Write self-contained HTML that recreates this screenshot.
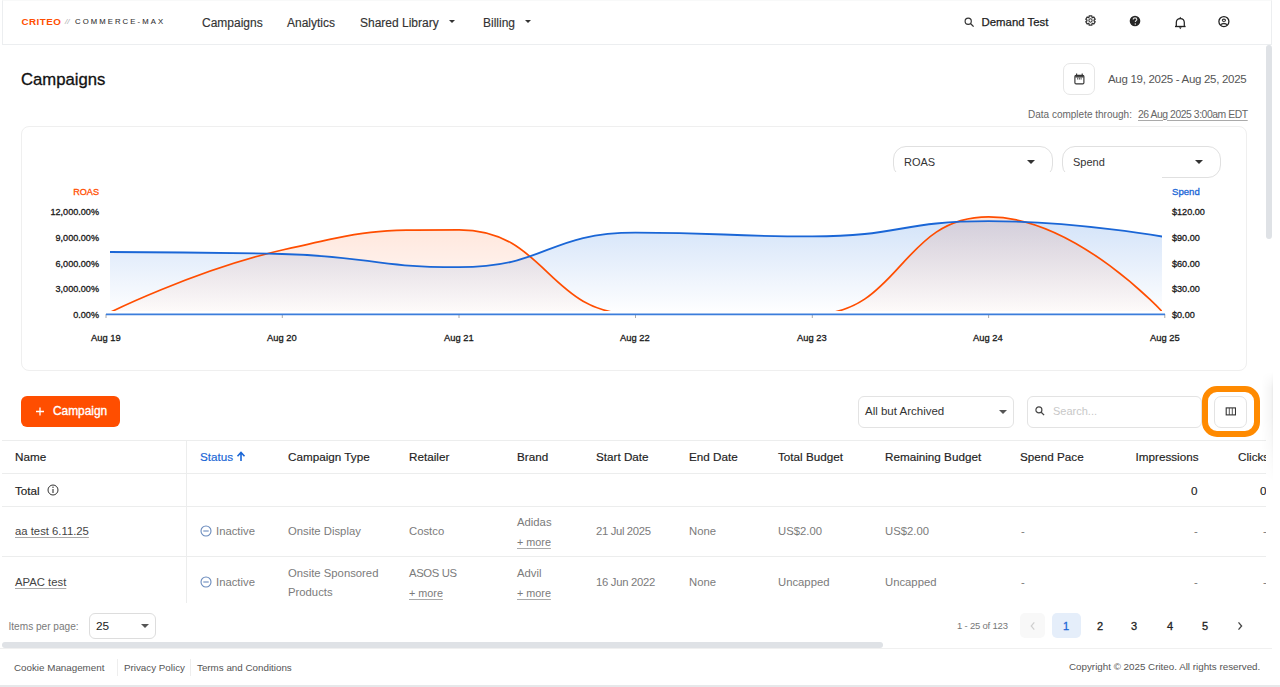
<!DOCTYPE html>
<html><head><meta charset="utf-8">
<style>
*{box-sizing:border-box;margin:0;padding:0}
html,body{width:1280px;height:687px;overflow:hidden;background:#fff;font-family:"Liberation Sans",sans-serif;color:#222}
.a{position:absolute}
.t{position:absolute;white-space:nowrap;line-height:1}
.hdr{left:2px;top:0;width:1270px;height:45px;border:1px solid #eceef0;border-top-color:#f8f9f9}
.nav{font-size:12px;color:#333;top:16.5px;-webkit-text-stroke:0.15px #333}
.caret{position:absolute;width:0;height:0;border-left:3px solid transparent;border-right:3px solid transparent;border-top:3px solid #333}
.box{position:absolute;border:1px solid #e3e3e3;background:#fff}
.th{font-size:11.7px;color:#222;top:451px;-webkit-text-stroke:0.15px #222}
.td{font-size:11.3px;color:#7b7b7b}
.u{text-decoration:underline;text-underline-offset:1.5px;text-decoration-color:#aaa}
.hl{position:absolute;height:1px;background:#eceded}
.ax{font-size:9.1px;color:#1a1a1a;-webkit-text-stroke:0.3px #1a1a1a}
.xl{font-size:9.4px;color:#1a1a1a;-webkit-text-stroke:0.3px #1a1a1a}
.pg{font-size:11px;color:#222;top:621px;-webkit-text-stroke:0.3px #222}
.ft{font-size:9.8px;color:#555;top:662.5px}
</style></head><body>
<!-- header -->
<div class="a hdr"></div>
<div class="t" style="left:21.5px;top:17.3px;font-size:9.8px;letter-spacing:0.45px;font-weight:bold;color:#ff4e00">CRITEO</div>
<div class="t" style="left:65px;top:18px;font-size:8px;color:#aaa;font-style:italic">//</div>
<div class="t" style="left:75px;top:18px;font-size:7.7px;color:#333;letter-spacing:2.1px;-webkit-text-stroke:0.1px #333">COMMERCE-MAX</div>
<div class="t nav" style="left:202px">Campaigns</div>
<div class="t nav" style="left:287px">Analytics</div>
<div class="t nav" style="left:360px">Shared Library</div>
<div class="caret" style="left:449px;top:20px"></div>
<div class="t nav" style="left:483px">Billing</div>
<div class="caret" style="left:525px;top:20px"></div>
<svg class="a" style="left:963.5px;top:16.5px" width="11" height="11" viewBox="0 0 11 11"><circle cx="4.2" cy="4.2" r="3.1" fill="none" stroke="#333" stroke-width="1.15"/><line x1="6.5" y1="6.5" x2="9.6" y2="9.6" stroke="#333" stroke-width="1.25"/></svg>
<div class="t nav" style="left:981.5px;font-size:11.4px;color:#222;-webkit-text-stroke:0.25px #222">Demand Test</div>
<svg class="a" style="left:1084px;top:14.2px" width="13" height="13" viewBox="-1 -1 15 15"><path d="M4.83,2.76 L4.95,1.12 L8.05,1.12 L8.17,2.76 L8.91,3.18 L10.39,2.47 L11.93,5.15 L10.58,6.08 L10.58,6.92 L11.93,7.85 L10.39,10.53 L8.91,9.82 L8.17,10.24 L8.05,11.88 L4.95,11.88 L4.83,10.24 L4.09,9.82 L2.61,10.53 L1.07,7.85 L2.42,6.92 L2.42,6.08 L1.07,5.15 L2.61,2.47 L4.09,3.18Z" fill="none" stroke="#333" stroke-width="1.45" stroke-linejoin="round"/><circle cx="6.5" cy="6.5" r="1.9" fill="none" stroke="#333" stroke-width="1.2"/></svg>
<svg class="a" style="left:1129px;top:14.8px" width="12" height="12" viewBox="0 0 12 12"><circle cx="6" cy="6" r="5.3" fill="#262626"/><path d="M4.2 4.6c0-1.1.8-1.8 1.8-1.8s1.8.7 1.8 1.6c0 1.2-1.5 1.3-1.5 2.6" fill="none" stroke="#ddd" stroke-width="1.2"/><circle cx="6.3" cy="8.9" r="0.75" fill="#ddd"/></svg>
<svg class="a" style="left:1170px;top:10px" width="20" height="22" viewBox="0 0 20 22"><path d="M6.3,16.4 V12.6 C6.3,9.9 8,8.5 10.3,8.5 C12.6,8.5 14.3,9.9 14.3,12.6 V16.4" fill="none" stroke="#222" stroke-width="1.25"/><path d="M5,16.5 H15.6" stroke="#222" stroke-width="1.35"/><path d="M8.9,17.2 H11.7 L10.3,19.3Z" fill="#333"/><path d="M9.1,8.6 L10.3,6.8 L11.5,8.6Z" fill="#222"/></svg>
<svg class="a" style="left:1210px;top:8px" width="28" height="28" viewBox="0 0 28 28"><circle cx="13.9" cy="13.6" r="5.0" fill="none" stroke="#222" stroke-width="1.3"/><ellipse cx="13.9" cy="12.3" rx="1.6" ry="1.15" fill="none" stroke="#333" stroke-width="1.1"/><path d="M10.4,17.2 C11.5,15.9 12.6,15.5 13.9,15.5 C15.2,15.5 16.3,15.9 17.4,17.2" fill="none" stroke="#333" stroke-width="1.3"/></svg>
<!-- vertical scrollbar -->
<div class="a" style="left:1266px;top:45px;width:6px;height:194px;background:#dfe2e6;border-radius:3px"></div>

<!-- title -->
<div class="t" style="left:21px;top:71.5px;font-size:16.7px;color:#111;-webkit-text-stroke:0.3px #111">Campaigns</div>
<div class="box" style="left:1063px;top:63px;width:32px;height:32px;border-radius:7px;border-color:#e6e6e6"></div>
<svg class="a" style="left:1068px;top:68px" width="22" height="22" viewBox="0 0 22 22"><rect x="6.9" y="7.3" width="9" height="8.6" rx="1.2" fill="none" stroke="#333" stroke-width="1.15"/><line x1="7.3" y1="8.8" x2="15.5" y2="8.8" stroke="#333" stroke-width="1.4"/><g stroke="#444" stroke-width="0.9"><line x1="9.7" y1="9.6" x2="9.7" y2="11.6"/><line x1="11.4" y1="9.6" x2="11.4" y2="11.6"/><line x1="13.1" y1="9.6" x2="13.1" y2="11.6"/></g><g stroke="#333" stroke-width="1.1"><line x1="8.6" y1="5.6" x2="8.6" y2="7.5"/><line x1="14.2" y1="5.6" x2="14.2" y2="7.5"/></g></svg>
<div class="t" style="left:1108px;top:73.5px;font-size:11.5px;letter-spacing:-0.3px;color:#555">Aug 19, 2025 - Aug 25, 2025</div>
<div class="t" style="left:1028px;top:110px;font-size:10px;color:#666">Data complete through:</div>
<div class="t u" style="left:1138px;top:109.5px;font-size:10.4px;letter-spacing:-0.45px;color:#666">26 Aug 2025 3:00am EDT</div>

<!-- chart card -->
<div class="box" style="left:21px;top:126px;width:1226px;height:245px;border-radius:8px;border-color:#efefef"></div>
<div class="box" style="left:893px;top:146px;width:160px;height:32px;border-radius:13px;border-color:#e0e0e0"></div>
<div class="t" style="left:904px;top:157px;font-size:11px;color:#333">ROAS</div>
<div class="caret" style="left:1027px;top:160px;border-left-width:4px;border-right-width:4px;border-top-width:4px"></div>
<div class="box" style="left:1062px;top:146px;width:159px;height:32px;border-radius:13px;border-color:#e0e0e0"></div>
<div class="t" style="left:1073px;top:157px;font-size:11px;color:#333">Spend</div>
<div class="caret" style="left:1195px;top:160px;border-left-width:4px;border-right-width:4px;border-top-width:4px"></div>
<div class="a" style="left:30px;top:172px;width:1132px;height:190px;background:#fff"></div>
<svg class="a" style="left:0;top:0" width="1280" height="687">
<defs>
<linearGradient id="gb" x1="0" y1="0" x2="0" y2="1"><stop offset="0" stop-color="#1b6fe0" stop-opacity="0.19"/><stop offset="1" stop-color="#1a66d6" stop-opacity="0.0"/></linearGradient>
<linearGradient id="go" x1="0" y1="0" x2="0" y2="1"><stop offset="0" stop-color="#ff4d00" stop-opacity="0.15"/><stop offset="1" stop-color="#ff4d00" stop-opacity="0.015"/></linearGradient>
<clipPath id="cp"><rect x="110" y="150" width="1052" height="161"/></clipPath><clipPath id="cp2"><rect x="110" y="150" width="1052" height="161.3"/></clipPath>
</defs>
<g clip-path="url(#cp)">
<path d="M106.00,314.40 C106.00,314.40 194.15,270.20 282.30,250.00 C370.65,229.80 370.65,229.80 459.00,229.80 C547.25,229.80 547.25,314.40 635.50,314.40 C723.90,314.40 723.90,314.40 812.30,314.40 C900.45,314.40 900.45,216.90 988.60,216.90 C1076.70,216.90 1164.80,314.40 1164.80,314.40 L1164.8,314.4 L106,314.4 Z" fill="url(#go)"/>
<path d="M106.00,252.00 C106.00,252.00 194.15,252.00 282.30,254.00 C370.65,256.00 370.65,267.20 459.00,267.20 C547.25,267.20 547.25,232.60 635.50,232.60 C723.90,232.60 723.90,236.40 812.30,236.40 C900.45,236.40 900.45,221.10 988.60,221.10 C1076.70,221.10 1164.80,237.00 1164.80,237.00 L1164.8,314.4 L106,314.4 Z" fill="url(#gb)"/>
<path d="M106.00,314.40 C106.00,314.40 194.15,270.20 282.30,250.00 C370.65,229.80 370.65,229.80 459.00,229.80 C547.25,229.80 547.25,314.40 635.50,314.40 C723.90,314.40 723.90,314.40 812.30,314.40 C900.45,314.40 900.45,216.90 988.60,216.90 C1076.70,216.90 1164.80,314.40 1164.80,314.40" fill="none" stroke="#ff4d00" stroke-width="1.7" clip-path="url(#cp2)"/>
<path d="M106.00,252.00 C106.00,252.00 194.15,252.00 282.30,254.00 C370.65,256.00 370.65,267.20 459.00,267.20 C547.25,267.20 547.25,232.60 635.50,232.60 C723.90,232.60 723.90,236.40 812.30,236.40 C900.45,236.40 900.45,221.10 988.60,221.10 C1076.70,221.10 1164.80,237.00 1164.80,237.00" fill="none" stroke="#1a66d6" stroke-width="1.8"/>
</g>
<g stroke="#aaa" stroke-width="1">
<line x1="106" y1="314" x2="106" y2="318"/><line x1="282.3" y1="314" x2="282.3" y2="318"/><line x1="459" y1="314" x2="459" y2="318"/><line x1="635.5" y1="314" x2="635.5" y2="318"/><line x1="812.3" y1="314" x2="812.3" y2="318"/><line x1="988.6" y1="314" x2="988.6" y2="318"/><line x1="1164.8" y1="314" x2="1164.8" y2="318"/>
</g>
<line x1="106" y1="314.4" x2="1165" y2="314.4" stroke="#3b7ddb" stroke-width="1.8"/>
</svg>
<div class="t ax" style="right:1181px;top:187.5px;color:#ff4e00;-webkit-text-stroke-color:#ff4e00">ROAS</div>
<div class="t ax" style="right:1181px;top:208px">12,000.00%</div>
<div class="t ax" style="right:1181px;top:234px">9,000.00%</div>
<div class="t ax" style="right:1181px;top:259.5px">6,000.00%</div>
<div class="t ax" style="right:1181px;top:285px">3,000.00%</div>
<div class="t ax" style="right:1181px;top:310.5px">0.00%</div>
<div class="t ax" style="left:1172px;top:186.5px;color:#1a66d6;-webkit-text-stroke-color:#1a66d6;font-size:9.6px">Spend</div>
<div class="t ax" style="left:1172px;top:208px">$120.00</div>
<div class="t ax" style="left:1172px;top:234px">$90.00</div>
<div class="t ax" style="left:1172px;top:259.5px">$60.00</div>
<div class="t ax" style="left:1172px;top:285px">$30.00</div>
<div class="t ax" style="left:1172px;top:310.5px">$0.00</div>
<div class="t xl" style="left:91px;top:333px">Aug 19</div>
<div class="t xl" style="left:267px;top:333px">Aug 20</div>
<div class="t xl" style="left:444px;top:333px">Aug 21</div>
<div class="t xl" style="left:620px;top:333px">Aug 22</div>
<div class="t xl" style="left:797px;top:333px">Aug 23</div>
<div class="t xl" style="left:973px;top:333px">Aug 24</div>
<div class="t xl" style="left:1150px;top:333px">Aug 25</div>

<!-- toolbar -->
<div class="a" style="left:21px;top:396px;width:99px;height:31px;background:#ff4e00;border-radius:6px"></div>
<svg class="a" style="left:35px;top:406px" width="10" height="11" viewBox="0 0 10 11"><path d="M5 1.5v8M1 5.5h8" stroke="#fff" stroke-width="1.3"/></svg>
<div class="t" style="left:53px;top:405.5px;font-size:11.9px;color:#fff;-webkit-text-stroke:0.35px #fff">Campaign</div>
<div class="box" style="left:858px;top:396px;width:156px;height:32px;border-radius:6px"></div>
<div class="t" style="left:865px;top:406px;font-size:11.5px;color:#333">All but Archived</div>
<div class="caret" style="left:999px;top:410px;border-left-width:4px;border-right-width:4px;border-top-width:4px;border-top-color:#555"></div>
<div class="box" style="left:1027px;top:396px;width:175px;height:32px;border-radius:6px"></div>
<svg class="a" style="left:1035px;top:406px" width="10" height="10" viewBox="0 0 11 11"><circle cx="4.3" cy="4.3" r="3.3" fill="none" stroke="#444" stroke-width="1.3"/><line x1="6.8" y1="6.8" x2="10" y2="10" stroke="#444" stroke-width="1.4"/></svg>
<div class="t" style="left:1053px;top:406px;font-size:11px;color:#c8c8c8">Search...</div>
<div class="box" style="left:1214px;top:396px;width:33px;height:32px;border-radius:7px"></div>
<svg class="a" style="left:1225px;top:407px" width="11" height="9" viewBox="0 0 11 9"><rect x="1.2" y="0.9" width="9.3" height="7" fill="none" stroke="#333" stroke-width="1.1"/><line x1="4.3" y1="1" x2="4.3" y2="8" stroke="#444" stroke-width="0.9"/><line x1="7.3" y1="1" x2="7.3" y2="8" stroke="#444" stroke-width="0.9"/></svg>
<div class="a" style="left:1202px;top:386px;width:58.2px;height:50.5px;border:6.5px solid #ff8a00;border-radius:15px"></div>

<!-- table -->
<div class="a" style="left:0;top:440px;width:1266px;height:170px;overflow:hidden">
</div>
<div class="hl" style="left:2px;top:440px;width:1264px"></div>
<div class="hl" style="left:2px;top:473px;width:1264px"></div>
<div class="hl" style="left:2px;top:506px;width:1264px"></div>
<div class="hl" style="left:2px;top:556px;width:1264px"></div>
<div class="a" style="left:186px;top:441px;width:1px;height:162px;background:#eceded"></div>
<div class="t th" style="left:15px">Name</div>
<div class="t th" style="left:200px;color:#1a66d6;-webkit-text-stroke-color:#1a66d6">Status</div>
<svg class="a" style="left:236px;top:451px" width="10" height="11" viewBox="0 0 10 11"><path d="M5 10V2M1.5 5.2L5 1.5l3.5 3.7" fill="none" stroke="#1a66d6" stroke-width="1.6"/></svg>
<div class="t th" style="left:288px">Campaign Type</div>
<div class="t th" style="left:409px">Retailer</div>
<div class="t th" style="left:517px">Brand</div>
<div class="t th" style="left:596px">Start Date</div>
<div class="t th" style="left:689px">End Date</div>
<div class="t th" style="left:778px">Total Budget</div>
<div class="t th" style="left:885px">Remaining Budget</div>
<div class="t th" style="left:1020px">Spend Pace</div>
<div class="t th" style="left:1135.5px">Impressions</div>
<div class="t th" style="left:1238px">Clicks</div>

<div class="t th" style="left:15px;top:485px">Total</div>
<svg class="a" style="left:47px;top:484px" width="12" height="12" viewBox="0 0 12 12"><circle cx="6" cy="6" r="5" fill="none" stroke="#333" stroke-width="1"/><line x1="6" y1="5" x2="6" y2="9" stroke="#333" stroke-width="1.1"/><circle cx="6" cy="3.3" r="0.7" fill="#333"/></svg>
<div class="t th" style="left:1191px;top:485px">0</div>
<div class="t th" style="left:1260px;top:485px">0</div>

<div class="t td u" style="left:15px;top:526px;color:#444">aa test 6.11.25</div>
<svg class="a" style="left:200px;top:525px" width="12" height="12" viewBox="0 0 12 12"><circle cx="6" cy="6" r="5" fill="none" stroke="#6a8bbd" stroke-width="1.1"/><line x1="3.3" y1="6" x2="8.7" y2="6" stroke="#6a8bbd" stroke-width="1.1"/></svg>
<div class="t td" style="left:216px;top:526px">Inactive</div>
<div class="t td" style="left:288px;top:526px">Onsite Display</div>
<div class="t td" style="left:409px;top:526px">Costco</div>
<div class="t td" style="left:517px;top:517px">Adidas</div>
<div class="t td u" style="left:517px;top:536.5px;font-size:10.8px">+ more</div>
<div class="t td" style="left:596px;top:526px;letter-spacing:-0.35px">21 Jul 2025</div>
<div class="t td" style="left:689px;top:526px">None</div>
<div class="t td" style="left:778px;top:526px">US$2.00</div>
<div class="t td" style="left:885px;top:526px">US$2.00</div>
<div class="t td" style="left:1021px;top:526px">-</div>
<div class="t td" style="left:1194px;top:526px">-</div>
<div class="t td" style="left:1263px;top:526px">-</div>

<div class="t td u" style="left:15px;top:577px;color:#444">APAC test</div>
<svg class="a" style="left:200px;top:576px" width="12" height="12" viewBox="0 0 12 12"><circle cx="6" cy="6" r="5" fill="none" stroke="#6a8bbd" stroke-width="1.1"/><line x1="3.3" y1="6" x2="8.7" y2="6" stroke="#6a8bbd" stroke-width="1.1"/></svg>
<div class="t td" style="left:216px;top:577px">Inactive</div>
<div class="t td" style="left:288px;top:568px">Onsite Sponsored</div>
<div class="t td" style="left:288px;top:587px">Products</div>
<div class="t td" style="left:409px;top:568px;letter-spacing:-0.35px">ASOS US</div>
<div class="t td u" style="left:409px;top:587.5px;font-size:10.8px">+ more</div>
<div class="t td" style="left:517px;top:568px">Advil</div>
<div class="t td u" style="left:517px;top:587.5px;font-size:10.8px">+ more</div>
<div class="t td" style="left:596px;top:577px;letter-spacing:-0.3px">16 Jun 2022</div>
<div class="t td" style="left:689px;top:577px">None</div>
<div class="t td" style="left:778px;top:577px">Uncapped</div>
<div class="t td" style="left:885px;top:577px">Uncapped</div>
<div class="t td" style="left:1021px;top:577px">-</div>
<div class="t td" style="left:1194px;top:577px">-</div>
<div class="t td" style="left:1263px;top:577px">-</div>
<div class="a" style="left:0;top:603px;width:1266px;height:8px;background:#fff"></div>
<div class="a" style="left:1266px;top:376px;width:14px;height:234px;background:#fff"></div><div class="a" style="left:1262px;top:372px;width:11px;height:110px;background:linear-gradient(to right,rgba(0,0,0,0),rgba(0,0,0,0.035) 80%,rgba(0,0,0,0.08));-webkit-mask-image:linear-gradient(to bottom,transparent,#000 15%,#000 40%,transparent)"></div>

<!-- pagination -->
<div class="t" style="left:8.5px;top:621.5px;font-size:10.1px;color:#7a7a7a">Items per page:</div>
<div class="box" style="left:89px;top:613px;width:67px;height:26px;border-radius:6px;border-color:#ddd"></div>
<div class="t" style="left:96px;top:620.5px;font-size:11.8px;color:#222">25</div>
<div class="caret" style="left:141px;top:624px;border-left-width:4px;border-right-width:4px;border-top-width:4px;border-top-color:#555"></div>
<div class="t" style="left:957px;top:621px;font-size:9.5px;letter-spacing:-0.2px;color:#777">1 - 25 of 123</div>
<div class="a" style="left:1020px;top:613px;width:25px;height:25px;background:#f8f8f8;border-radius:5px"></div>
<svg class="a" style="left:1028px;top:620px" width="10" height="12" viewBox="0 0 10 12"><path d="M6.3 2.4L3.2 6l3.1 3.6" fill="none" stroke="#cfcfcf" stroke-width="1.2"/></svg>
<div class="a" style="left:1052px;top:613px;width:29px;height:25px;background:#e5eefa;border-radius:5px"></div>
<div class="t pg" style="left:1063px;color:#1a66d6;-webkit-text-stroke-color:#1a66d6">1</div>
<div class="t pg" style="left:1097px">2</div>
<div class="t pg" style="left:1131px">3</div>
<div class="t pg" style="left:1167px">4</div>
<div class="t pg" style="left:1202px">5</div>
<svg class="a" style="left:1235px;top:620px" width="10" height="12" viewBox="0 0 10 12"><path d="M3.5 2.4L6.6 6l-3.1 3.6" fill="none" stroke="#444" stroke-width="1.3"/></svg>
<div class="a" style="left:2px;top:642px;width:881px;height:6px;background:#dfe2e6;border-radius:3px"></div>
<div class="hl" style="left:0;top:648px;width:1272px;background:#f0f0f0"></div>
<!-- footer -->
<div class="t ft" style="left:14px">Cookie Management</div>
<div class="a" style="left:117px;top:659px;width:1px;height:17px;background:#eeeeee"></div>
<div class="t ft" style="left:124px">Privacy Policy</div>
<div class="a" style="left:190px;top:659px;width:1px;height:17px;background:#eeeeee"></div>
<div class="t ft" style="left:197px">Terms and Conditions</div>
<div class="t ft" style="left:1069px;top:662px">Copyright &copy; 2025 Criteo. All rights reserved.</div>
<div class="a" style="left:0;top:685px;width:1280px;height:2px;background:#e6e8ea"></div>
</body></html>
